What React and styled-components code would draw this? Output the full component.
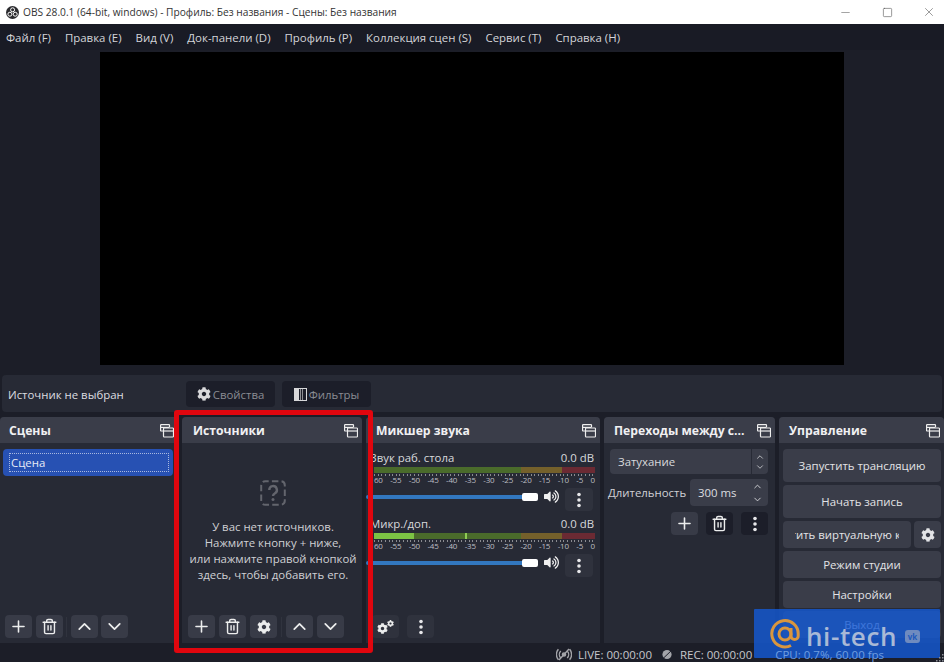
import React from 'react';
import styled, { createGlobalStyle } from 'styled-components';
import { Plus, Trash2, ChevronUp, ChevronDown, Minus, Square, X } from 'lucide-react';
import { FaCog, FaVolumeUp } from 'react-icons/fa';

const Global = createGlobalStyle`
  html, body { margin: 0; padding: 0; background: #1c1e28; }
  * { box-sizing: border-box; }
`;

const Page = styled.div`
  position: relative; width: 944px; height: 662px; overflow: hidden;
  display: flex; flex-direction: column;
  background: #1c1e28; color: #e4e4e6;
  font-family: "Open Sans", "Noto Sans", sans-serif; font-size: 11.4px;
`;
const TitleBar = styled.div`
  height: 24px; background: #fff; color: #333; display: flex; align-items: center;
  padding-left: 6px; font-size: 10.2px; gap: 4px; flex: none;
`;
const TitleText = styled.span` flex: 1; `;
const WinBtn = styled.div`
  width: 42px; height: 24px; display: flex; align-items: center; justify-content: center; color: #555; flex: none;
  &:last-child { margin-right: -2px; }
`;
const WinControls = styled.div`
  display: flex; flex: none; margin-right: -4px; gap: 0;
`;
const MenuBar = styled.div`
  height: 26px; display: flex; align-items: center; gap: 14px; padding-left: 6px; flex: none;
  background: #191b25; color: #d4d5d9; font-size: 11.45px;
`;
const Preview = styled.div`
  flex: none; height: 321px; display: flex; justify-content: center; padding: 2px 0 6px;
`;
const Canvas = styled.div` width: 744px; background: #000; `;
const ContextBar = styled.div`
  flex: none; height: 37px; margin: 4px 2px 5px; padding: 6px 0 5px 6px; border-radius: 4px;
  background: #272a35; display: flex; align-items: center; gap: 7px;
`;
const ContextLabel = styled.div` width: 171px; color: #dcdde0; `;
const ContextBtn = styled.div`
  width: 89px; height: 26px; border-radius: 4px; background: #1c1e29; color: #8a8c93;
  display: flex; align-items: center; justify-content: center; gap: 2px;
  svg { color: #d8d8da; }
`;
const Docks = styled.div`
  flex: none; height: 226px; display: flex; gap: 4px; align-items: stretch;
`;
const Dock = styled.section`
  width: ${p => p.$w}px; flex: none; display: flex; flex-direction: column;
  background: #272a35; border-radius: 4px 4px 0 0;
`;
const DockHead = styled.header`
  height: 26px; flex: none; background: #3a3d49; border-radius: 4px 4px 0 0;
  display: flex; align-items: center; justify-content: space-between;
  padding: 1px 4px 0 ${p => p.$pl || 10}px; font-weight: 700; font-size: 12.2px; color: #f0f0f2;
`;
const DockBody = styled.div`
  flex: 1; min-height: 0; display: flex; flex-direction: column; padding-top: ${p => p.$top || 0}px;
`;
const SceneItem = styled.div`
  height: 27px; margin: 6px 5px 0 3px; padding: 4px 4px 4px 6px; background: #2751b3; border-radius: 4px;
  display: flex;
`;
const SceneFocus = styled.div`
  flex: 1; border: 1px dotted #a9b9e0; padding-left: 1px; line-height: 17px; color: #e8ecf6;
`;
const Spacer = styled.div` flex: 1; `;
const Toolbar = styled.div`
  flex: none; height: 23px; margin: 0 0 5px ${p => p.$ml || 5}px; display: flex; gap: ${p => p.$gap || 4}px; align-items: center;
`;
const ToolBtn = styled.div`
  width: ${p => p.$w || 27}px; height: 23px; border-radius: 4px;
  background: ${p => p.$dark ? '#1c1e29' : p.$dim ? '#2f323d' : '#383b47'};
  display: flex; align-items: center; justify-content: center; color: #eceded; flex: none;
`;
const Sep = styled.div` width: 1px; height: 20px; background: #30333e; `;
const GearPair = styled.div`
  display: flex; align-items: flex-start; width: 17px; height: 14px;
  svg:first-child { margin-top: 3px; flex: none; }
  svg:last-child { margin-left: -1px; flex: none; }
`;
const Empty = styled.div`
  flex: 1; display: flex; flex-direction: column; align-items: center; padding: 37px 0 0 2px;
`;
const EmptyText = styled.div`
  margin-top: 13px; text-align: center; line-height: 16px; color: #cfd0d4;
`;
const Channel = styled.div` height: 66px; padding: 4px 5px 0 8px; `;
const ChannelHead = styled.div`
  display: flex; justify-content: space-between; height: 16px; line-height: 16px; color: #d8d9dc;
  padding-right: 1px; margin-left: -4px;
`;
const Meter = styled.div`
  display: flex; height: 6px; margin-top: 1px; position: relative;
`;
const MeterSeg = styled.div`
  width: ${p => p.$w}px; background: ${p => p.$c};
`;
const MeterLive = styled.div`
  position: absolute; left: 0; top: 0; bottom: 0; width: ${p => p.$w}px; background: #7cc344;
`;
const MeterPeak = styled.div`
  position: absolute; left: 91px; top: 0; bottom: 0; width: 2px; background: #8fcc55;
`;
const Scale = styled.div`
  display: flex; justify-content: space-between; margin: 1px -1px 0 0; height: 10px; line-height: 11px;
  font-size: 8px; color: #bdbec3; letter-spacing: -0.2px; padding-right: 1px;
  background: repeating-linear-gradient(to right, #8a8b90 0 1px, transparent 1px 3.64px) left top / 100% 2px no-repeat;
`;
const VolRow = styled.div`
  display: flex; align-items: center; height: 23px; margin: 4px 0 0 -8px;
`;
const VolSlider = styled.div`
  display: flex; align-items: center; flex: none; margin-bottom: 6px;
`;
const VolTrack = styled.div`
  width: 157px; height: 4px; background: #3277bf; border-radius: 2px 0 0 2px; flex: none;
`;
const VolThumb = styled.div`
  width: 16px; height: 8px; background: #fff; border-radius: 2px; flex: none; margin-left: -1px;
`;
const VolIcon = styled.div`
  width: 27px; display: flex; justify-content: center; color: #f0f0f0; flex: none; margin-bottom: 6px;
`;
const SelectBox = styled.div`
  margin: 6px 7px 0 6px; height: 25px; border-radius: 4px; background: #3a3d49; display: flex; color: #d8d9dc;
`;
const SelectText = styled.div` flex: 1; padding-left: 8px; line-height: 25px; `;
const SelectArrows = styled.div`
  width: 17px; border-left: 1px solid #272a35; display: flex; flex-direction: column; align-items: center; justify-content: center; color: #cfd0d4;
`;
const DurationRow = styled.div`
  margin: 5px 7px 0 4px; display: flex; align-items: center; justify-content: space-between; color: #d0d1d5;
`;
const Spin = styled.div`
  width: 78px; height: 27px; background: #3a3d49; border-radius: 4px; display: flex; align-items: center; padding: 0 2px 0 8px; color: #dcdde0;
`;
const SpinArrows = styled.div`
  margin-left: auto; width: 17px; display: flex; flex-direction: column; align-items: center; gap: 2px; color: #d8d9dc;
`;
const TransButtons = styled.div`
  margin: 6px 7px 0 0; display: flex; gap: 8px; justify-content: flex-end;
`;
const Ctrl = styled.div`
  display: flex; flex-direction: column; gap: 3px; padding: 6px 3px 3px 4px; flex: 1;
`;
const CtrlBtn = styled.div`
  height: ${p => p.$h}px; flex: ${p => p.$grow ? 1 : 'none'}; min-width: 0; width: ${p => p.$w ? p.$w + 'px' : 'auto'};
  background: #3a3d49; border-radius: 4px; color: #e2e3e6;
  display: flex; align-items: center; justify-content: center; white-space: nowrap; overflow: hidden;
`;
const CtrlRow = styled.div` display: flex; gap: 3px; height: 27px; `;
const Clip = styled.div` width: 104px; overflow: hidden; display: flex; justify-content: center; flex: none; `;
const Status = styled.footer`
  position: relative; z-index: 1;
  flex: none; height: 19px; display: flex; align-items: center; padding: 3px 0 0 556px; font-size: 11.5px; color: #c6c7cb;
`;
const StatusIcon = styled.svg` flex: none; color: #a3a4a9; margin-right: ${p => p.$mr}px; `;
const StatusText = styled.span`
  margin-right: ${p => p.$mr}px; color: ${p => p.$c || 'inherit'};
`;
const Grip = styled.svg`
  position: absolute; right: 0; bottom: 0;
`;

const RedFrame = styled.div`
  position: absolute; z-index: 2; left: 174px; top: 410px; width: 199px; height: 243px; border: 5px solid #e0060e; border-radius: 3px; pointer-events: none;
`;
const Watermark = styled.div`
  position: absolute; left: 754px; top: 609px; width: 186px; height: 49px;
  background: rgba(20, 90, 215, 0.8); display: flex; align-items: center; padding-left: 16px; gap: 6px; border-radius: 1px;
`;
const WmText = styled.span`
  font-size: 26px; line-height: 26px; color: #a9b9d6; font-weight: 600; letter-spacing: 0.6px; margin-top: 4px;
`;
const WmVk = styled.div`
  width: 15px; height: 13px; border-radius: 3px; background: #6f8bbf; color: #1e59bb; font-size: 8px; font-weight: 700;
  display: flex; align-items: center; justify-content: center; margin: 6px 0 0 2px;
`;

const FloatIcon = () => (
  <svg width="14" height="14" viewBox="0 0 14 14" fill="none" stroke="#eee" strokeWidth="1.2">
    <path d="M9.5 3V1.2a.6.6 0 0 0-.6-.6H1.2a.6.6 0 0 0-.6.6v5.2a.6.6 0 0 0 .6.6H3" />
    <rect x="3.5" y="4" width="10" height="9" rx=".8" />
    <path d="M3.5 7h10" />
    <path d="M.6 3.4h8.9" />
  </svg>
);
const Dots = () => (
  <svg width="6" height="16" viewBox="0 0 6 16" fill="#e8e8ea">
    <circle cx="3" cy="2.5" r="1.8" /><circle cx="3" cy="8" r="1.8" /><circle cx="3" cy="13.5" r="1.8" />
  </svg>
);
const QuestionIcon = () => (
  <svg width="26" height="26" viewBox="0 0 26 26" fill="none" stroke="#63656d" strokeWidth="2">
    <rect x="1.2" y="1.2" width="23.6" height="23.6" rx="4" strokeDasharray="6.5 3.2" strokeDashoffset="3" />
    <path d="M9.3 10a3.8 3.8 0 1 1 5.7 3.2c-1.3.8-2 1.4-2 2.9" strokeWidth="2.4" />
    <circle cx="13" cy="19.6" r="1.5" fill="#63656d" stroke="none" />
  </svg>
);
const FilterIcon = () => (
  <svg width="13" height="13" viewBox="0 0 13 13" fill="none" stroke="#d8d8da" strokeWidth="1">
    <rect x=".5" y=".5" width="12" height="12" />
    <rect x="1" y="1" width="4" height="11" fill="#d8d8da" stroke="none" />
    <path d="M6.5 1v11M8.5 1v11" stroke="#8d8e93" />
  </svg>
);
const ObsLogo = () => (
  <svg width="13" height="13" viewBox="0 0 13 13">
    <circle cx="6.5" cy="6.5" r="6.5" fill="#2b2b2f" />
    <circle cx="6.6" cy="3.8" r="2" fill="none" stroke="#fff" strokeWidth="1" />
    <circle cx="3.9" cy="8.2" r="2" fill="none" stroke="#fff" strokeWidth="1" />
    <circle cx="9.2" cy="8.2" r="2" fill="none" stroke="#fff" strokeWidth="1" />
  </svg>
);
const Add = () => <ToolBtn><Plus size={19} strokeWidth={2} /></ToolBtn>;
const Del = ({ dark }) => <ToolBtn $dark={dark}><Trash2 size={17} strokeWidth={2} /></ToolBtn>;
const Up = () => <ToolBtn><ChevronUp size={21} strokeWidth={2} /></ToolBtn>;
const Down = () => <ToolBtn><ChevronDown size={21} strokeWidth={2} /></ToolBtn>;

const scale = ['60', '-55', '-50', '-45', '-40', '-35', '-30', '-25', '-20', '-15', '-10', '-5', '0'];
const menu = ['Файл (F)', 'Правка (E)', 'Вид (V)', 'Док-панели (D)', 'Профиль (P)', 'Коллекция сцен (S)', 'Сервис (T)', 'Справка (H)'];

const MixerChannel = ({ name, live }) => (
  <Channel>
    <ChannelHead><span>{name}</span><span>0.0 dB</span></ChannelHead>
    <Meter>
      <MeterSeg $w={147} $c="#4a6b2b" />
      <MeterSeg $w={41} $c="#74602b" />
      <MeterSeg $w={33} $c="#6b2a33" />
      {live && <MeterLive $w={40} />}
      {live && <MeterPeak />}
    </Meter>
    <Scale>{scale.map(s => <span key={s}>{s}</span>)}</Scale>
    <VolRow>
      <VolSlider><VolTrack /><VolThumb /></VolSlider>
      <VolIcon><FaVolumeUp size={15} /></VolIcon>
      <ToolBtn $w={28} $dim><Dots /></ToolBtn>
    </VolRow>
  </Channel>
);

export default function App() {
  return (
    <Page>
      <Global />
      <TitleBar>
        <ObsLogo />
        <TitleText>OBS 28.0.1 (64-bit, windows) - Профиль: Без названия - Сцены: Без названия</TitleText>
        <WinControls>
          <WinBtn><Minus size={13} strokeWidth={1} /></WinBtn>
          <WinBtn><Square size={11} strokeWidth={1.3} /></WinBtn>
          <WinBtn><X size={14} strokeWidth={1} /></WinBtn>
        </WinControls>
      </TitleBar>
      <MenuBar>{menu.map(m => <span key={m}>{m}</span>)}</MenuBar>
      <Preview><Canvas /></Preview>
      <ContextBar>
        <ContextLabel>Источник не выбран</ContextLabel>
        <ContextBtn><FaCog size={14} />Свойства</ContextBtn>
        <ContextBtn><FilterIcon />Фильтры</ContextBtn>
      </ContextBar>
      <Docks>
        <Dock $w={178}>
          <DockHead $pl={9}><span>Сцены</span><FloatIcon /></DockHead>
          <DockBody>
            <SceneItem><SceneFocus>Сцена</SceneFocus></SceneItem>
            <Spacer />
            <Toolbar $gap={3.6}>
              <Add /><Del /><Sep /><Up /><Down />
            </Toolbar>
          </DockBody>
        </Dock>
        <Dock $w={180}>
          <DockHead $pl={11}><span>Источники</span><FloatIcon /></DockHead>
          <DockBody>
            <Empty>
              <QuestionIcon />
              <EmptyText>
                У вас нет источников.<br />
                Нажмите кнопку + ниже,<br />
                или нажмите правой кнопкой<br />
                здесь, чтобы добавить его.
              </EmptyText>
            </Empty>
            <Toolbar $ml={6}>
              <Add /><Del /><ToolBtn><FaCog size={14} /></ToolBtn><Sep /><Up /><Down />
            </Toolbar>
          </DockBody>
        </Dock>
        <Dock $w={234}>
          <DockHead><span>Микшер звука</span><FloatIcon /></DockHead>
          <DockBody $top={3}>
            <MixerChannel name="Звук раб. стола" />
            <MixerChannel name="Микр./доп." live />
            <Spacer />
            <Toolbar $ml={6} $gap={8}>
              <ToolBtn $dim><GearPair><FaCog size={11} /><FaCog size={7} /></GearPair></ToolBtn>
              <ToolBtn $dim><Dots /></ToolBtn>
            </Toolbar>
          </DockBody>
        </Dock>
        <Dock $w={171}>
          <DockHead><span>Переходы между с...</span><FloatIcon /></DockHead>
          <DockBody>
            <SelectBox>
              <SelectText>Затухание</SelectText>
              <SelectArrows><ChevronUp size={10} /><ChevronDown size={10} /></SelectArrows>
            </SelectBox>
            <DurationRow>
              <span>Длительность</span>
              <Spin>300 ms<SpinArrows><ChevronUp size={11} /><ChevronDown size={11} /></SpinArrows></Spin>
            </DurationRow>
            <TransButtons>
              <Add /><Del dark /><ToolBtn $dark><Dots /></ToolBtn>
            </TransButtons>
          </DockBody>
        </Dock>
        <Dock $w={165}>
          <DockHead><span>Управление</span><FloatIcon /></DockHead>
          <Ctrl>
            <CtrlBtn $h={33}>Запустить трансляцию</CtrlBtn>
            <CtrlBtn $h={33}>Начать запись</CtrlBtn>
            <CtrlRow>
              <CtrlBtn $grow><Clip><span>Запустить виртуальную камеру</span></Clip></CtrlBtn>
              <CtrlBtn $w={27}><FaCog size={14} /></CtrlBtn>
            </CtrlRow>
            <CtrlBtn $h={27}>Режим студии</CtrlBtn>
            <CtrlBtn $h={27}>Настройки</CtrlBtn>
            <CtrlBtn $h={27}>Выход</CtrlBtn>
          </Ctrl>
        </Dock>
      </Docks>
      <Status>
        <StatusIcon $mr={6} width="16" height="13" viewBox="0 0 16 13" fill="none" stroke="currentColor" strokeWidth="1.4">
          <circle cx="8" cy="6.5" r="1.6" fill="currentColor" />
          <path d="M4.8 3a5 5 0 0 0 0 7M11.2 3a5 5 0 0 1 0 7M2.4 1.2a8 8 0 0 0 0 10.6M13.6 1.2a8 8 0 0 1 0 10.6M3 12L13 1" />
        </StatusIcon>
        <StatusText $mr={10}>LIVE: 00:00:00</StatusText>
        <StatusIcon $mr={8} width="10" height="11" viewBox="0 0 10 11" fill="currentColor" stroke="none">
          <circle cx="5" cy="5.5" r="4.6" /><path d="M0 10.5L10 1" stroke="#1c1e28" strokeWidth="1" />
        </StatusIcon>
        <StatusText $mr={23}>REC: 00:00:00</StatusText>
        <StatusText $mr={0} $c="#6f9ee0">CPU: 0.7%, 60.00 fps</StatusText>
        <Grip width="8" height="8" viewBox="0 0 8 8" fill="#8b8d94">
          <rect x="6" y="0" width="1.5" height="1.5" />
          <rect x="3" y="3" width="1.5" height="1.5" /><rect x="6" y="3" width="1.5" height="1.5" />
          <rect x="0" y="6" width="1.5" height="1.5" /><rect x="3" y="6" width="1.5" height="1.5" /><rect x="6" y="6" width="1.5" height="1.5" />
        </Grip>
      </Status>
      <RedFrame />
      <Watermark>
        <svg width="30" height="30" viewBox="0 0 30 30" fill="none" stroke="#d9963e" strokeWidth="3">
          <circle cx="15" cy="15" r="6" />
          <path d="M21 9v8a3.6 3.6 0 0 0 7.2 0V15A13.2 13.2 0 1 0 21 26.5" />
        </svg>
        <WmText>hi-tech</WmText>
        <WmVk>vk</WmVk>
      </Watermark>
    </Page>
  );
}
